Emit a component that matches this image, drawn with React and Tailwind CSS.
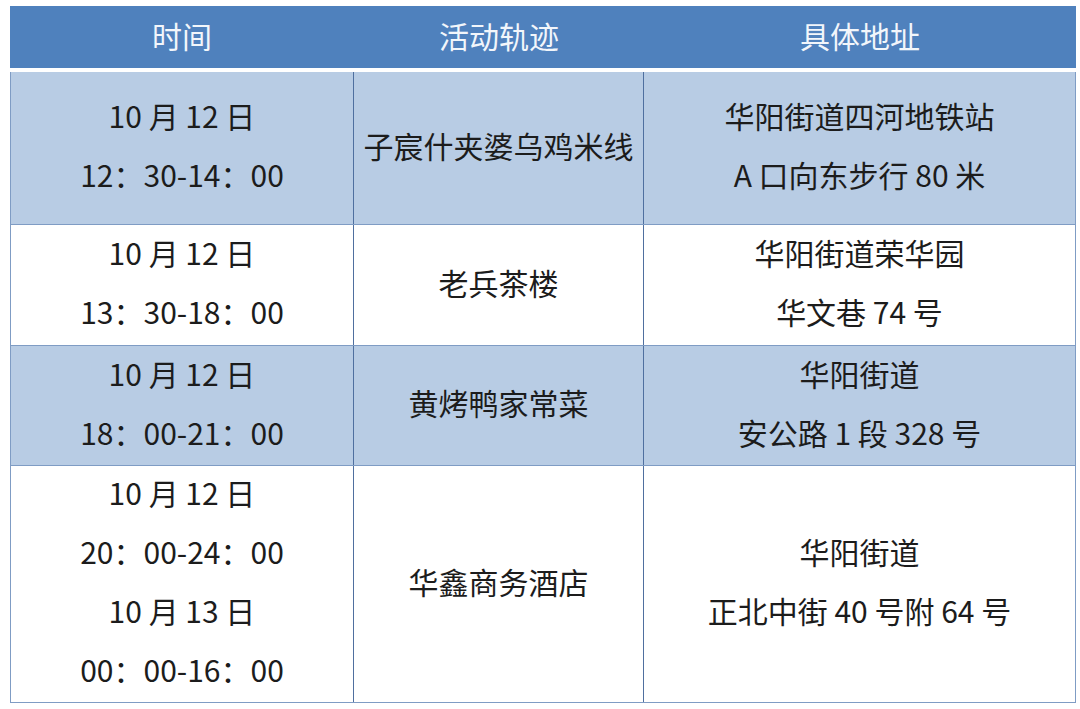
const rows = [
  {
    h: "h-[152px]",
    bg: "bg-[#b8cce4]",
    time: ["10 月 12 日", "12：30-14：00"],
    place: "子宸什夹婆乌鸡米线",
    addr: ["华阳街道四河地铁站", "A 口向东步行 80 米"],
  },
  {
    h: "h-[121px]",
    bg: "bg-white",
    time: ["10 月 12 日", "13：30-18：00"],
    place: "老兵茶楼",
    addr: ["华阳街道荣华园", "华文巷 74 号"],
  },
  {
    h: "h-[120px]",
    bg: "bg-[#b8cce4]",
    time: ["10 月 12 日", "18：00-21：00"],
    place: "黄烤鸭家常菜",
    addr: ["华阳街道", "安公路 1 段 328 号"],
  },
  {
    h: "h-[237px]",
    bg: "bg-white",
    time: ["10 月 12 日", "20：00-24：00", "10 月 13 日", "00：00-16：00"],
    place: "华鑫商务酒店",
    addr: ["华阳街道", "正北中街 40 号附 64 号"],
  },
];

function Lines({ items }) {
  return (
    <div className="flex flex-col items-center -mt-[6px]">
      {items.map((t, i) => (
        <div key={i} className="leading-[59px] whitespace-pre">
          {t}
        </div>
      ))}
    </div>
  );
}

export default function App() {
  return (
    <div
      className="w-[1080px] h-[709px] bg-white pt-[6px] pl-[10px] text-[30px] text-[#1c1c1c]"
      style={{ fontFamily: '"Noto Sans CJK SC", "Noto Sans", sans-serif' }}
    >
      <div className="w-[1066px]">
        <div className="grid grid-cols-[344px_290px_432px] h-[62px] bg-[#4f81bd] text-[#f2f6fb] border-b-[4px] border-white box-content">
          <div className="flex items-center justify-center pb-[4px]">时间</div>
          <div className="flex items-center justify-center pb-[4px]">活动轨迹</div>
          <div className="flex items-center justify-center pb-[4px]">具体地址</div>
        </div>
        <div className="border-l border-r border-b border-[#7f9cc4]">
          {rows.map((r, i) => (
            <div
              key={i}
              className={`grid grid-cols-[343px_290px_431px] ${r.h} ${r.bg} ${i > 0 ? "border-t border-[#7f9cc4]" : ""}`}
            >
              <div className="flex items-center justify-center border-r border-[#4f6f9f]">
                <Lines items={r.time} />
              </div>
              <div className="flex items-center justify-center border-r border-[#4f6f9f]">
                <div className="-mt-[6px]">{r.place}</div>
              </div>
              <div className="flex items-center justify-center">
                <Lines items={r.addr} />
              </div>
            </div>
          ))}
        </div>
      </div>
    </div>
  );
}
